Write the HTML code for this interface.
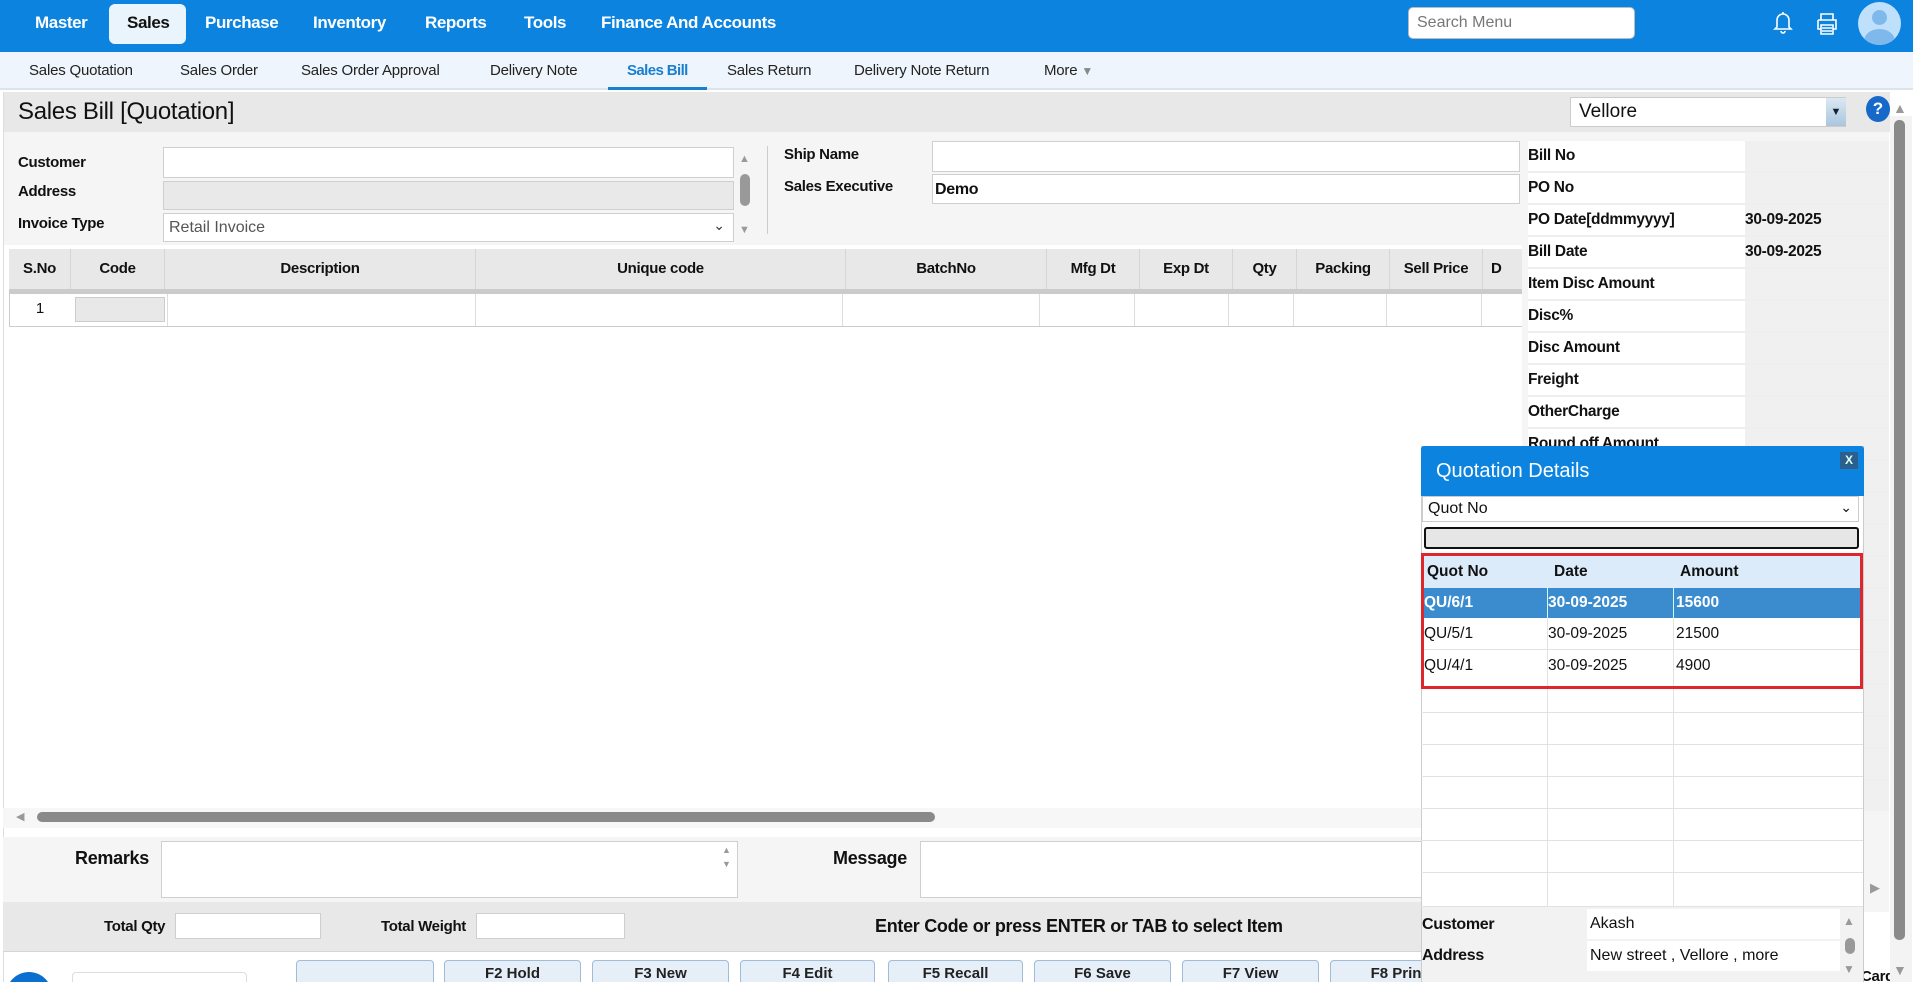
<!DOCTYPE html>
<html style="overflow:hidden;height:982px"><head><meta charset="utf-8"><style>
*{box-sizing:border-box;margin:0;padding:0}
body{width:1917px;height:982px;overflow:hidden;background:#fff;font-family:"Liberation Sans",sans-serif;color:#111;position:relative}
#w{position:absolute;left:0;top:0;width:1917px;height:982px;overflow:hidden}
.a{position:absolute}
.nav{left:0;top:0;width:1913px;height:52px;background:#0b83df}
.nv{top:13px;font-size:17px;font-weight:bold;color:#fff;letter-spacing:-0.4px}
.sub{left:0;top:52px;width:1913px;height:38px;background:#eef5fc;border-bottom:2px solid #dde3ea}
.sb{top:62px;font-size:15px;color:#222;letter-spacing:-0.2px}
.lbl{font-size:15px;font-weight:bold;letter-spacing:-0.3px}
.inp{background:#fff;border:1px solid #cfcfcf}
.th{top:249px;height:40px;background:#e8e8e8;border-right:1px solid #d5d5d5;font-size:15px;font-weight:bold;text-align:center;line-height:40px;letter-spacing:-0.3px}
.td{top:294px;height:32px;border-right:1px solid #ddd;border-bottom:1px solid #ccc}
.rp{left:1528px;width:361px;height:32px;border-bottom:2px solid #eee}
.rp span{position:absolute;left:0;top:0;width:217px;height:30px;background:#fff;line-height:30px;font-size:15.5px;font-weight:bold;letter-spacing:-0.3px}
.rp b{position:absolute;left:217px;top:0;width:144px;height:30px;background:#f0f0f0;line-height:30px;font-size:15.5px;font-weight:bold;letter-spacing:-0.3px}
.btn{top:960px;height:34px;background:#e6eef8;border:1px solid #9fbcd9;border-radius:4px;text-align:center;font-size:15px;font-weight:bold;line-height:26px;color:#222}
.pr{left:1421px;width:442px;height:32px;border-bottom:1px solid #e2e2e2}
.pc{position:absolute;top:0;height:100%;border-right:1px solid #e2e2e2;font-size:15.5px;line-height:32px}
</style></head><body><div id="w">
<div class="a nav"></div>
<div class="a" style="left:109px;top:4px;width:77px;height:40px;background:#eaf4fd;border-radius:6px"></div>
<div class="a nv" style="left:35px">Master</div>
<div class="a nv" style="left:127px;color:#111">Sales</div>
<div class="a nv" style="left:205px">Purchase</div>
<div class="a nv" style="left:313px">Inventory</div>
<div class="a nv" style="left:425px">Reports</div>
<div class="a nv" style="left:524px">Tools</div>
<div class="a nv" style="left:601px">Finance And Accounts</div>
<div class="a" style="left:1408px;top:7px;width:227px;height:32px;background:#fff;border-radius:5px;border:1px solid #bbb;font-size:16px;color:#777;padding:6px 8px">Search Menu</div>
<svg class="a" style="left:1770px;top:8px" width="26" height="28" viewBox="0 0 26 28"><path d="M7 19V12a6 6 0 0 1 12 0v7l2 2H5z M11 23a2 2 0 0 0 4 0 M13 4v2" fill="none" stroke="#fff" stroke-width="1.6"/></svg>
<svg class="a" style="left:1814px;top:12px" width="26" height="24" viewBox="0 0 26 24"><path d="M7 8V2h12v6 M4 8h18v9h-3 M7 17H4V8 M7 13h12v9H7z M8 16h10 M8 19h10" fill="none" stroke="#fff" stroke-width="1.6"/></svg>
<div class="a" style="left:1858px;top:2px;width:43px;height:43px;border-radius:50%;background:#bfe0fb;overflow:hidden"><div class="a" style="left:14px;top:8px;width:15px;height:15px;border-radius:50%;background:#7fb9ec"></div><div class="a" style="left:6px;top:27px;width:31px;height:24px;border-radius:50%;background:#7fb9ec"></div></div>

<div class="a sub"></div>
<div class="a sb" style="left:29px">Sales Quotation</div>
<div class="a sb" style="left:180px">Sales Order</div>
<div class="a sb" style="left:301px">Sales Order Approval</div>
<div class="a sb" style="left:490px">Delivery Note</div>
<div class="a sb" style="left:627px;color:#1b7fd0;font-weight:bold;letter-spacing:-0.6px">Sales Bill</div>
<div class="a" style="left:608px;top:87px;width:99px;height:3px;background:#1b7fd0"></div>
<div class="a sb" style="left:727px">Sales Return</div>
<div class="a sb" style="left:854px">Delivery Note Return</div>
<div class="a sb" style="left:1044px">More <span style="color:#888;font-size:12px">▼</span></div>

<div class="a" style="left:3px;top:92px;width:1887px;height:40px;background:#e8e8e8"></div>
<div class="a" style="left:18px;top:98px;font-size:24px;letter-spacing:-0.3px">Sales Bill [Quotation]</div>
<div class="a" style="left:1570px;top:97px;width:276px;height:30px;background:#fff;border:1px solid #ccc;font-size:19px;padding:3px 8px">Vellore</div>
<div class="a" style="left:1826px;top:98px;width:20px;height:28px;background:linear-gradient(#dbe8f3,#a9c6de);color:#123;font-size:11px;text-align:center;line-height:28px">▼</div>
<div class="a" style="left:1866px;top:96px;width:24px;height:26px;border-radius:50%;background:#1668c9;color:#fff;font-weight:bold;font-size:17px;text-align:center;line-height:26px">?</div>

<div class="a" style="left:3px;top:132px;width:1519px;height:113px;background:#f5f5f5"></div>
<div class="a lbl" style="left:18px;top:154px">Customer</div>
<div class="a lbl" style="left:18px;top:183px">Address</div>
<div class="a lbl" style="left:18px;top:215px">Invoice Type</div>
<div class="a inp" style="left:163px;top:147px;width:571px;height:31px"></div>
<div class="a inp" style="left:163px;top:181px;width:571px;height:29px;background:#e9e9e9"></div>
<div class="a inp" style="left:163px;top:213px;width:571px;height:29px;font-size:16px;color:#555;padding:5px 5px">Retail Invoice<span style="position:absolute;right:8px;top:3px;color:#333;font-size:14px">⌄</span></div>
<div class="a" style="left:739px;top:153px;color:#999;font-size:11px">▲</div>
<div class="a" style="left:740px;top:174px;width:10px;height:32px;border-radius:5px;background:#999"></div>
<div class="a" style="left:739px;top:224px;color:#999;font-size:11px">▼</div>
<div class="a" style="left:767px;top:146px;width:1px;height:88px;background:#ccc"></div>
<div class="a lbl" style="left:784px;top:146px">Ship Name</div>
<div class="a lbl" style="left:784px;top:178px">Sales Executive</div>
<div class="a inp" style="left:932px;top:141px;width:588px;height:31px"></div>
<div class="a inp" style="left:932px;top:174px;width:588px;height:30px;font-size:16px;font-weight:bold;padding:6px 2px;letter-spacing:-0.3px">Demo</div>

<div class="a th" style="left:9px;width:62px">S.No</div>
<div class="a th" style="left:71px;width:94px">Code</div>
<div class="a th" style="left:165px;width:311px">Description</div>
<div class="a th" style="left:476px;width:370px">Unique code</div>
<div class="a th" style="left:846px;width:201px">BatchNo</div>
<div class="a th" style="left:1047px;width:93px">Mfg Dt</div>
<div class="a th" style="left:1140px;width:93px">Exp Dt</div>
<div class="a th" style="left:1233px;width:64px">Qty</div>
<div class="a th" style="left:1297px;width:93px">Packing</div>
<div class="a th" style="left:1390px;width:93px">Sell Price</div>
<div class="a th" style="left:1483px;width:39px;text-align:left;padding-left:8px;border:0">D</div>
<div class="a" style="left:9px;top:289px;width:1513px;height:5px;background:#cbcbcb"></div>
<div class="a" style="left:9px;top:294px;width:1513px;height:33px;border-left:1px solid #ccc;border-bottom:1px solid #ccc"></div>
<div class="a" style="left:9px;top:300px;width:62px;text-align:center;font-size:15px">1</div>
<div class="a" style="left:75px;top:297px;width:90px;height:25px;background:#e8e8e8;border:1px solid #ccc"></div>
<div class="a td" style="left:71px;width:97px;border-bottom:0"></div>
<div class="a td" style="left:168px;width:308px;border-bottom:0"></div>
<div class="a td" style="left:476px;width:367px;border-bottom:0"></div>
<div class="a td" style="left:843px;width:197px;border-bottom:0"></div>
<div class="a td" style="left:1040px;width:95px;border-bottom:0"></div>
<div class="a td" style="left:1135px;width:94px;border-bottom:0"></div>
<div class="a td" style="left:1229px;width:65px;border-bottom:0"></div>
<div class="a td" style="left:1294px;width:93px;border-bottom:0"></div>
<div class="a td" style="left:1387px;width:95px;border-bottom:0"></div>
<div class="a" style="left:3px;top:92px;width:1px;height:890px;background:#ddd"></div>

<div class="a" style="left:3px;top:808px;width:1519px;height:20px;background:#f7f7f7"></div>
<div class="a" style="left:16px;top:810px;color:#999;font-size:11px">◀</div>
<div class="a" style="left:37px;top:812px;width:898px;height:10px;border-radius:5px;background:#8a8a8a"></div>
<div class="a" style="left:3px;top:837px;width:1519px;height:65px;background:#f5f5f5"></div>
<div class="a lbl" style="left:75px;top:848px;font-size:18px">Remarks</div>
<div class="a inp" style="left:161px;top:841px;width:577px;height:57px"></div>
<div class="a" style="left:722px;top:843px;color:#999;font-size:9px;line-height:14px">▲<br>▼</div>
<div class="a lbl" style="left:833px;top:848px;font-size:18px">Message</div>
<div class="a inp" style="left:920px;top:841px;width:602px;height:57px"></div>
<div class="a" style="left:3px;top:902px;width:1519px;height:50px;background:#e8e8e8;border-bottom:1px solid #d5d5d5"></div>
<div class="a lbl" style="left:104px;top:918px;font-size:15px">Total Qty</div>
<div class="a inp" style="left:175px;top:913px;width:146px;height:26px"></div>
<div class="a lbl" style="left:381px;top:918px;font-size:15px">Total Weight</div>
<div class="a inp" style="left:476px;top:913px;width:149px;height:26px"></div>
<div class="a lbl" style="left:875px;top:916px;font-size:18px">Enter Code or press ENTER or TAB to select Item</div>
<div class="a" style="left:6px;top:972px;width:46px;height:46px;border-radius:50%;background:#0b6fcf"></div>
<div class="a" style="left:72px;top:972px;width:175px;height:20px;background:#fff;border-radius:4px;border:1px solid #ddd"></div>
<div class="a btn" style="left:296px;width:138px"></div>
<div class="a btn" style="left:444px;width:137px">F2 Hold</div>
<div class="a btn" style="left:592px;width:137px">F3 New</div>
<div class="a btn" style="left:740px;width:135px">F4 Edit</div>
<div class="a btn" style="left:888px;width:135px">F5 Recall</div>
<div class="a btn" style="left:1034px;width:137px">F6 Save</div>
<div class="a btn" style="left:1182px;width:137px">F7 View</div>
<div class="a btn" style="left:1330px;width:137px">F8 Print</div>
<div class="a lbl" style="left:1861px;top:968px;font-size:15px">Card</div>

<div class="a" style="left:1522px;top:132px;width:367px;height:780px;background:#f5f5f5"></div>
<div class="a rp" style="top:141px"><span>Bill No</span><b></b></div>
<div class="a rp" style="top:173px"><span>PO No</span><b></b></div>
<div class="a rp" style="top:205px"><span>PO Date[ddmmyyyy]</span><b>30-09-2025</b></div>
<div class="a rp" style="top:237px"><span>Bill Date</span><b>30-09-2025</b></div>
<div class="a rp" style="top:269px"><span>Item Disc Amount</span><b></b></div>
<div class="a rp" style="top:301px"><span>Disc%</span><b></b></div>
<div class="a rp" style="top:333px"><span>Disc Amount</span><b></b></div>
<div class="a rp" style="top:365px"><span>Freight</span><b></b></div>
<div class="a rp" style="top:397px"><span>OtherCharge</span><b></b></div>
<div class="a rp" style="top:429px"><span>Round off Amount</span><b></b></div>
<div class="a rp" style="top:461px"><b></b></div>
<div class="a rp" style="top:493px"><b></b></div>
<div class="a rp" style="top:525px"><b></b></div>
<div class="a rp" style="top:557px"><b></b></div>
<div class="a rp" style="top:589px"><b></b></div>
<div class="a rp" style="top:621px"><b></b></div>
<div class="a rp" style="top:653px"><b></b></div>
<div class="a rp" style="top:685px"><b></b></div>
<div class="a rp" style="top:717px"><b></b></div>
<div class="a rp" style="top:749px"><b></b></div>
<div class="a rp" style="top:781px;height:28px"><b></b></div>
<div class="a" style="left:1870px;top:880px;color:#999;font-size:13px">▶</div>

<div class="a" style="left:1890px;top:116px;width:22px;height:866px;background:#f3f3f3"></div>
<div class="a" style="left:1893px;top:100px;color:#999;font-size:14px">▲</div>
<div class="a" style="left:1894px;top:120px;width:11px;height:820px;border-radius:5px;background:#8a8a8a"></div>
<div class="a" style="left:1893px;top:962px;color:#999;font-size:14px">▼</div>

<div class="a" style="left:1421px;top:446px;width:443px;height:536px;background:#fff;border:1px solid #ccc"></div>
<div class="a" style="left:1421px;top:446px;width:443px;height:50px;background:#0b83df;border-radius:3px 3px 0 0"></div>
<div class="a" style="left:1436px;top:460px;color:#fff;font-size:20px">Quotation Details</div>
<div class="a" style="left:1840px;top:452px;width:18px;height:17px;background:#2b5f8e;color:#dfe;font-weight:bold;font-size:12px;text-align:center;line-height:17px">X</div>
<div class="a" style="left:1422px;top:496px;width:437px;height:26px;border:1px solid #ccc;font-size:16px;padding:3px 5px">Quot No<span style="position:absolute;right:6px;top:2px;font-size:14px">⌄</span></div>
<div class="a" style="left:1424px;top:527px;width:435px;height:22px;background:#e6e6e6;border:2px solid #111;border-radius:3px"></div>
<div class="a pr" style="top:681px"><div class="pc" style="left:0;width:127px"></div><div class="pc" style="left:127px;width:126px"></div></div>
<div class="a pr" style="top:713px"><div class="pc" style="left:0;width:127px"></div><div class="pc" style="left:127px;width:126px"></div></div>
<div class="a pr" style="top:745px"><div class="pc" style="left:0;width:127px"></div><div class="pc" style="left:127px;width:126px"></div></div>
<div class="a pr" style="top:777px"><div class="pc" style="left:0;width:127px"></div><div class="pc" style="left:127px;width:126px"></div></div>
<div class="a pr" style="top:809px"><div class="pc" style="left:0;width:127px"></div><div class="pc" style="left:127px;width:126px"></div></div>
<div class="a pr" style="top:841px"><div class="pc" style="left:0;width:127px"></div><div class="pc" style="left:127px;width:126px"></div></div>
<div class="a pr" style="top:873px;height:34px"><div class="pc" style="left:0;width:127px"></div><div class="pc" style="left:127px;width:126px"></div></div>
<div class="a" style="left:1421px;top:553px;width:442px;height:136px;border:3px solid #e0262d;background:#fff">
 <div class="a" style="left:0;top:0;width:436px;height:32px;background:#dcebfa;font-weight:bold;font-size:15.5px;line-height:32px">
  <span class="a" style="left:3px">Quot No</span><span class="a" style="left:130px">Date</span><span class="a" style="left:256px">Amount</span></div>
 <div class="a" style="left:0;top:32px;width:436px;height:30px;background:#3a8ccf;color:#fff;font-weight:bold;font-size:15.5px;line-height:30px">
  <div class="pc" style="left:0;width:124px;line-height:30px;border-color:#cfe">QU/6/1</div><div class="pc" style="left:124px;width:126px;line-height:30px;border-color:#cfe">30-09-2025</div><span class="a" style="left:252px">15600</span></div>
 <div class="a" style="left:0;top:62px;width:436px;height:32px;border-bottom:1px solid #e2e2e2">
  <div class="pc" style="left:0;width:124px">QU/5/1</div><div class="pc" style="left:124px;width:126px">30-09-2025</div><span class="a" style="left:252px;font-size:15.5px;line-height:32px">21500</span></div>
 <div class="a" style="left:0;top:94px;width:436px;height:36px">
  <div class="pc" style="left:0;width:124px">QU/4/1</div><div class="pc" style="left:124px;width:126px">30-09-2025</div><span class="a" style="left:252px;font-size:15.5px;line-height:32px">4900</span></div>
</div>
<div class="a" style="left:1422px;top:907px;width:441px;height:75px;background:#f2f2f2"></div>
<div class="a lbl" style="left:1422px;top:916px;font-size:16px">Customer</div>
<div class="a lbl" style="left:1422px;top:947px;font-size:16px">Address</div>
<div class="a" style="left:1587px;top:909px;width:253px;height:30px;background:#fff;font-size:16px;padding:6px 3px">Akash</div>
<div class="a" style="left:1587px;top:941px;width:253px;height:30px;background:#fff;font-size:16px;padding:6px 3px">New street , Vellore , more</div>
<div class="a" style="left:1843px;top:914px;color:#999;font-size:12px">▲</div>
<div class="a" style="left:1845px;top:938px;width:10px;height:16px;border-radius:5px;background:#999"></div>
<div class="a" style="left:1843px;top:962px;color:#999;font-size:12px">▼</div>
</div></body></html>
